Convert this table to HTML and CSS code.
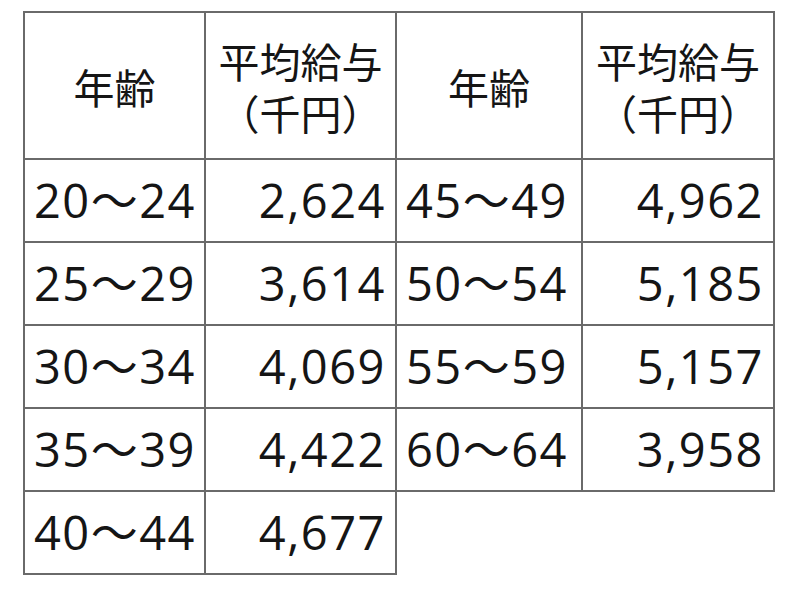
FILE: index.html
```html
<!DOCTYPE html>
<html lang="ja">
<head>
<meta charset="utf-8">
<title>年齢別平均給与</title>
<link rel="stylesheet" href="styles.css">
</head>
<body>
<table class="salary">
  <colgroup>
    <col class="c1"><col class="c2"><col class="c3"><col class="c4">
  </colgroup>
  <thead>
    <tr class="head">
      <th>年齢</th>
      <th><span class="ln">平均給与</span><span class="ln">（千円）</span></th>
      <th>年齢</th>
      <th><span class="ln">平均給与</span><span class="ln">（千円）</span></th>
    </tr>
  </thead>
  <tbody>
    <tr><td class="age">20～24</td><td class="val">2,624</td><td class="age">45～49</td><td class="val">4,962</td></tr>
    <tr><td class="age">25～29</td><td class="val">3,614</td><td class="age">50～54</td><td class="val">5,185</td></tr>
    <tr><td class="age">30～34</td><td class="val">4,069</td><td class="age">55～59</td><td class="val">5,157</td></tr>
    <tr><td class="age">35～39</td><td class="val">4,422</td><td class="age">60～64</td><td class="val">3,958</td></tr>
    <tr class="last"><td class="age">40～44</td><td class="val">4,677</td></tr>
  </tbody>
</table>
</body>
</html>
```
FILE: styles.css
```css
html, body {
  margin: 0;
  padding: 0;
  background: #ffffff;
}

body {
  font-family: "Open Sans", "Noto Sans CJK JP", sans-serif;
  color: #151515;
}

.salary {
  border-collapse: collapse;
  table-layout: fixed;
  margin: 11px 0 0 23px;
}

.salary .c1 { width: 181px; }
.salary .c2 { width: 191px; }
.salary .c3 { width: 186px; }
.salary .c4 { width: 192px; }

.salary th,
.salary td {
  border: 2px solid #6a6a6a;
  padding: 0;
  box-sizing: border-box;
}

.salary th {
  height: 147px;
  font-family: "Noto Sans CJK JP", sans-serif;
  font-weight: 400;
  font-size: 41px;
  line-height: 52px;
  text-align: center;
  vertical-align: middle;
}

.salary th .ln {
  display: block;
  height: 52px;
}

.salary td {
  height: 83px;
  font-size: 47px;
  line-height: 1;
  letter-spacing: 1.5px;
  vertical-align: middle;
  white-space: nowrap;
}

.salary td.age {
  text-align: left;
  padding-left: 9px;
}

.salary td.val {
  text-align: right;
  padding-right: 9px;
}
```
